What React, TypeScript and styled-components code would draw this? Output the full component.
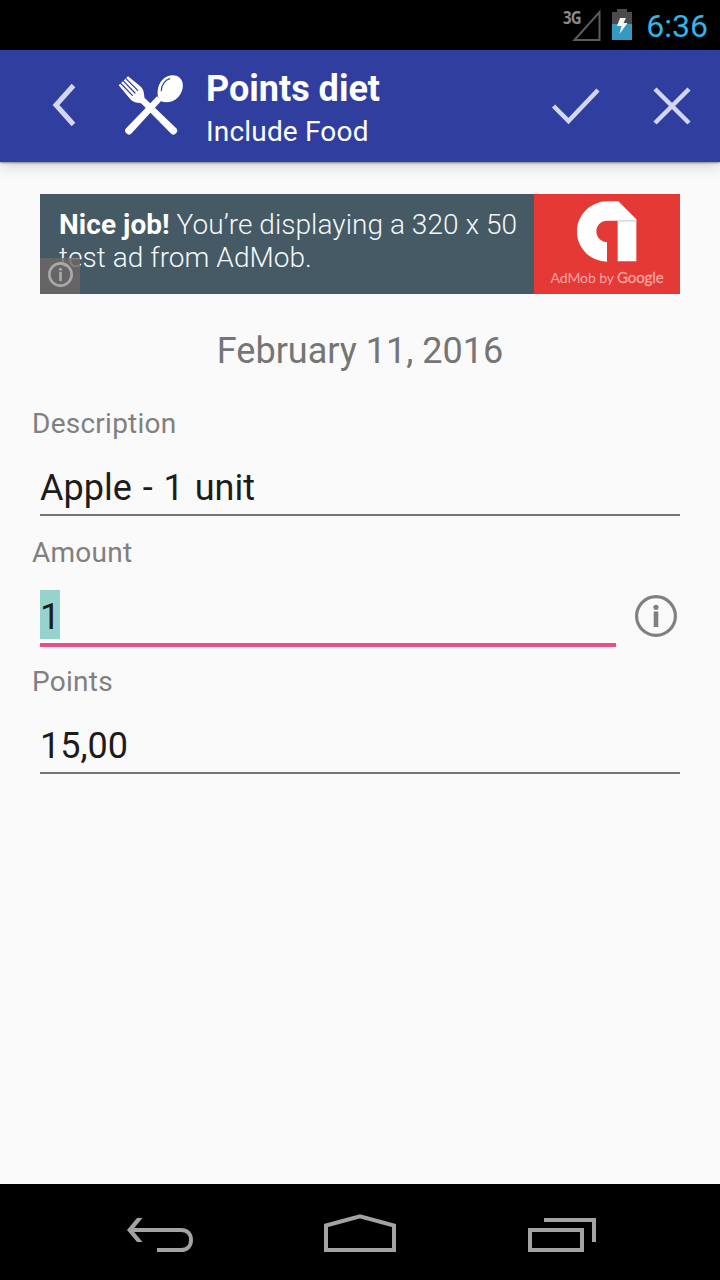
import React from "react";
import styled, { createGlobalStyle } from "styled-components";

const GlobalStyle = createGlobalStyle`
  * { box-sizing: border-box; }
  body { margin: 0; background: #fafafa; font-family: Roboto, "Liberation Sans", sans-serif; }
  svg { display: block; flex: none; }
`;

const Screen = styled.div`
  display: flex;
  flex-direction: column;
  width: 720px;
  height: 1280px;
  overflow: hidden;
  background: #fafafa;
`;

const StatusBar = styled.div`
  display: flex;
  flex: none;
  justify-content: flex-end;
  height: 50px;
  padding-right: 12px;
  background: #000;
`;

const Network = styled.span`
  height: 34px;
  margin-right: -10px;
  color: #8a8a8a;
  font: 700 17.5px/34px "Open Sans", sans-serif;
  letter-spacing: -0.8px;
  transform: scaleX(0.86);
  transform-origin: right;
`;

const Clock = styled.span`
  margin-left: 14px;
  color: #33b5e5;
  font-size: 32px;
  line-height: 52px;
`;

const AppBar = styled.header`
  display: flex;
  flex: none;
  align-items: flex-start;
  height: 112px;
  padding: 22px 28px 0 50px;
  background: #303f9f;
  box-shadow: 0 1px 2px rgba(0, 0, 0, 0.4), 0 4px 14px rgba(0, 0, 0, 0.17);
  z-index: 1;
`;

const BarAction = styled.button<{ $gap: number }>`
  margin: 8px 0 0 ${(p) => p.$gap}px;
  padding: 0;
  border: 0;
  background: none;
`;

const Titles = styled.div`
  display: flex;
  flex: 1;
  flex-direction: column;
  margin-left: 20px;
  color: #fff;
  white-space: nowrap;
`;

const Title = styled.h1`
  margin: -5px 0 0;
  font-size: 36px;
  font-weight: 700;
  line-height: 44px;
`;

const Subtitle = styled.span`
  margin-top: 4px;
  font-size: 28px;
  line-height: 34px;
  letter-spacing: 0.18px;
`;

const Content = styled.main`
  display: flex;
  flex: 1;
  flex-direction: column;
  padding: 32px 32px 0;
`;

const Ad = styled.section`
  position: relative;
  display: flex;
  height: 100px;
  margin: 0 8px;
  background: #455a64;
`;

const AdText = styled.p`
  flex: 1;
  margin: 0;
  padding: 14px 0 0 19px;
  color: #f3f8fa;
  font-size: 28px;
  font-weight: 300;
  line-height: 33px;
  letter-spacing: 0.05px;
  white-space: nowrap;

  b { color: #fff; font-weight: 700; }
`;

const AdBadge = styled.div`
  position: absolute;
  left: 0;
  bottom: 0;
  display: flex;
  align-items: center;
  justify-content: center;
  width: 40px;
  height: 36px;
  padding-bottom: 3px;
  background: rgba(110, 103, 103, 0.82);
`;

const AdBrand = styled.div`
  display: flex;
  flex-direction: column;
  align-items: center;
  width: 146px;
  padding-top: 7px;
  background: #e53935;
`;

const BrandName = styled.span`
  margin-top: 5px;
  color: #f5a5a3;
  font: 400 14px/20px Lato, sans-serif;
  letter-spacing: -0.1px;
  white-space: nowrap;

  b {
    font-size: 15px;
    font-weight: 400;
    -webkit-text-stroke: 0.3px #f5a5a3;
  }
`;

const DateLine = styled.h2`
  margin: 35px 0 31px;
  color: #757575;
  font-size: 36px;
  font-weight: 400;
  line-height: 45px;
  text-align: center;
`;

const Field = styled.div`
  height: 129px;
`;

const Label = styled.div`
  color: #808080;
  font-size: 28px;
  line-height: 38px;
  letter-spacing: 0.25px;
`;

const InputRow = styled.div`
  display: flex;
  padding: 0 8px;
`;

const Input = styled.div<{ $focused?: boolean }>`
  flex: 1;
  height: ${(p) => (p.$focused ? 75 : 73)}px;
  padding-top: 18px;
  border-bottom: ${(p) => (p.$focused ? "4px solid #ec4c87" : "2px solid #757575")};
  color: #1c1c1c;
  font-size: 36px;
  word-spacing: 2px;
`;

const Value = styled.span<{ $selected?: boolean }>`
  display: inline-block;
  height: 49px;
  padding-top: 5px;
  line-height: 45px;
  background: ${(p) => (p.$selected ? "#95d3cc" : "transparent")};
`;

const InfoButton = styled.button`
  align-self: flex-start;
  margin: 23px 3px 0 19px;
  padding: 0;
  border: 0;
  background: none;
`;

const NavBar = styled.nav`
  display: flex;
  flex: none;
  justify-content: space-between;
  height: 96px;
  padding: 28px 122px 0 126px;
  background: #000;
`;

const SignalIcon = () => (
  <svg width="30" height="50" viewBox="0 0 30 50" fill="none" stroke="#5c5c5c" strokeWidth="2">
    <path d="M3.5 40 28.5 12V40Z" />
  </svg>
);

const BatteryIcon = styled(({ className }: { className?: string }) => (
  <svg className={className} width="20" height="50" viewBox="0 0 20 50">
    <path d="M0 12H5V9H15V12H20V24H0Z" fill="#4b4b4b" />
    <path d="M0 24H20V40H0Z" fill="#3699c1" />
    <path d="M8 18H14L11.5 23H15.5L7.5 34 9.5 26H5Z" fill="#f5f5f5" />
  </svg>
))`
  margin-left: 11px;
`;

const BackIcon = () => (
  <svg width="28" height="50" viewBox="0 0 28 50" fill="none" stroke="#d3d7f2" strokeWidth="5">
    <path d="M23.5 5.5 6 25 23.5 44.5" />
  </svg>
);

const CutleryIcon = styled(({ className }: { className?: string }) => (
  <svg className={className} width="70" height="65" viewBox="258 66 210 195">
    <g fill="#fff">
      <path d="M381 139 394 152 305 250A11 11 0 0 1 289 234Z" />
      <path d="M345 145 332 158 422 250A11 11 0 0 0 438 234Z" />
      <path d="M389 150C379 139 381 107 396 91C412 72 440 71 452 86C464 101 459 127 443 143C427 158 400 161 389 150Z" />
      <path d="M294 79 330 108C344 119 341 134 345 149L350 158 342 166 334 160C318 158 307 156 298 144L266 106Z" />
    </g>
    <path d="M394 122C394 105 405 90 419 86" fill="none" stroke="#303f9f" strokeWidth="3.5" strokeLinecap="round" />
    <path d="M287 85 323 121M279 92 315 129M271 99 307 136" stroke="#303f9f" strokeWidth="3.8" strokeLinecap="round" />
  </svg>
))`
  margin-left: 38px;
`;

const CheckIcon = () => (
  <svg width="50" height="50" viewBox="0 0 50 50" fill="none" stroke="#d3d7f2" strokeWidth="4.5">
    <path d="M3.5 26 18.5 41 48 10" />
  </svg>
);

const CloseIcon = () => (
  <svg width="40" height="50" viewBox="0 0 40 50" fill="none" stroke="#d3d7f2" strokeWidth="4.5">
    <path d="M3 9 37 43M37 9 3 43" />
  </svg>
);

const InfoIcon = ({ size, color, width }: { size: number; color: string; width: number }) => (
  <svg width={size} height={size} viewBox="0 0 42 42">
    <circle cx="21" cy="21" r={21 - width / 2} fill="none" stroke={color} strokeWidth={width} />
    <circle cx="21" cy="12.3" r="2.6" fill={color} />
    <path d="M18.7 16.5H23.3V32H18.7Z" fill={color} />
  </svg>
);

const AdMobIcon = () => (
  <svg width="60" height="61" viewBox="156 47 180 183">
    <path d="M246 229A90 90 0 0 1 246 48H280L334 102V228H278V106H246A32 32 0 0 0 246 170Z" fill="#fff" />
    <path d="M278 104H334V109H278Z" fill="#d9dde2" />
  </svg>
);

const NavBackIcon = () => (
  <svg width="68" height="44" viewBox="0 0 68 44" fill="none" stroke="#a3a3a3" strokeWidth="4">
    <path d="M4 18H55C61 18 65 22 65 28S61 38 55 38H31" />
    <path d="M1 18 11 6H16.5L6.5 18 16.5 30H11Z" fill="#a3a3a3" stroke="none" />
  </svg>
);

const NavHomeIcon = () => (
  <svg width="74" height="44" viewBox="0 0 74 44" fill="none" stroke="#a3a3a3" strokeWidth="4">
    <path d="M2 13.5 36 4.2 70 13.5V38H2Z" />
  </svg>
);

const NavRecentsIcon = () => (
  <svg width="70" height="44" viewBox="0 0 70 44" fill="none" stroke="#a3a3a3" strokeWidth="4">
    <path d="M2 18H54V38H2ZM16 8H66V30" />
  </svg>
);

export default function App() {
  return (
    <Screen>
      <GlobalStyle />
      <StatusBar>
        <Network>3G</Network>
        <SignalIcon />
        <BatteryIcon />
        <Clock>6:36</Clock>
      </StatusBar>
      <AppBar>
        <BarAction $gap={0}><BackIcon /></BarAction>
        <CutleryIcon />
        <Titles>
          <Title>Points diet</Title>
          <Subtitle>Include Food</Subtitle>
        </Titles>
        <BarAction $gap={0}><CheckIcon /></BarAction>
        <BarAction $gap={52}><CloseIcon /></BarAction>
      </AppBar>
      <Content>
        <Ad>
          <AdText>
            <b>Nice job!</b> You’re displaying a 320 x 50<br />
            test ad from AdMob.
          </AdText>
          <AdBrand>
            <AdMobIcon />
            <BrandName>AdMob by <b>Google</b></BrandName>
          </AdBrand>
          <AdBadge><InfoIcon size={25} color="#a9a9a9" width={4.5} /></AdBadge>
        </Ad>
        <DateLine>February 11, 2016</DateLine>
        <Field>
          <Label>Description</Label>
          <InputRow><Input><Value>Apple - 1 unit</Value></Input></InputRow>
        </Field>
        <Field>
          <Label>Amount</Label>
          <InputRow>
            <Input $focused><Value $selected>1</Value></Input>
            <InfoButton><InfoIcon size={42} color="#808080" width={3.2} /></InfoButton>
          </InputRow>
        </Field>
        <Field>
          <Label>Points</Label>
          <InputRow><Input><Value>15,00</Value></Input></InputRow>
        </Field>
      </Content>
      <NavBar>
        <NavBackIcon />
        <NavHomeIcon />
        <NavRecentsIcon />
      </NavBar>
    </Screen>
  );
}
